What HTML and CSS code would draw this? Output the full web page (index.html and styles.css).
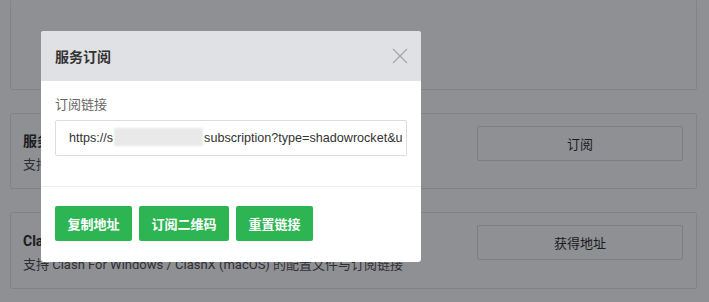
FILE: index.html
```html
<!DOCTYPE html>
<html lang="zh-CN">
<head>
    <meta charset="UTF-8">
    <meta name="viewport" content="width=device-width, initial-scale=1.0">
    <title>服务订阅</title>
    <link rel="stylesheet" href="styles.css">
</head>
<body>
    <div class="page">
        <div class="card card-top"></div>

        <div class="card">
            <div class="card-info">
                <div class="card-title">服务订阅</div>
                <div class="card-desc">支持 Shadowrocket / Quantumult 等客户端的订阅链接</div>
            </div>
            <button class="btn-outline">订阅</button>
        </div>

        <div class="card card-clash">
            <div class="card-info">
                <div class="card-title">Clash</div>
                <div class="card-desc">支持 Clash For Windows / ClashX (macOS) 的配置文件与订阅链接</div>
            </div>
            <button class="btn-outline">获得地址</button>
        </div>
    </div>

    <!-- 遮罩 + 弹窗 -->
    <div class="mask"></div>
    <div class="dialog">
        <div class="dialog-header">
            <span class="dialog-title">服务订阅</span>
            <button class="dialog-close" aria-label="关闭">
                <svg width="16" height="16" viewBox="0 0 16 16">
                    <path d="M1 1 L15 15 M15 1 L1 15" stroke="#a7a8ab" stroke-width="1.4" fill="none"/>
                </svg>
            </button>
        </div>
        <div class="dialog-body">
            <div class="field-label">订阅链接</div>
            <div class="link-input">https://s<span class="blurred"></span>subscription?type=shadowrocket&amp;u</div>
        </div>
        <div class="dialog-footer">
            <button class="btn-green">复制地址</button>
            <button class="btn-green">订阅二维码</button>
            <button class="btn-green">重置链接</button>
        </div>
    </div>
</body>
</html>
```

FILE: styles.css
```css
/* 基础 */
body {
    margin: 0;
    background-color: #ffffff;
    font-family: Roboto, "Liberation Sans", "Noto Sans CJK SC", sans-serif;
    color: #333;
    overflow: hidden;
}
button {
    font-family: inherit;
}
.page {
    padding: 0 12px 0 10px;
}

/* 背景卡片 */
.card {
    box-sizing: border-box;
    height: 76px;
    margin-top: 23px;
    border: 1px solid #e8e8e8;
    border-radius: 2px;
    padding: 12px 13px 0 12px;
    display: flex;
    justify-content: space-between;
    align-items: flex-start;
}
.card-top {
    margin-top: 0;
    height: 90px;
    border-top: none;
}
.card-clash {
    height: 77px;
}
.card-info {
    margin-top: 5px;
}
.card-clash .card-info {
    margin-top: 6px;
}
.card-title {
    font-size: 14px;
    font-weight: bold;
    line-height: 20px;
    color: #333;
}
.card-desc {
    margin-top: 4px;
    font-size: 13px;
    line-height: 20px;
    color: #555;
}
.btn-outline {
    width: 206px;
    height: 35px;
    background: #fff;
    border: 1px solid #dedede;
    border-radius: 2px;
    font-size: 13px;
    color: #333;
}

/* 遮罩 */
.mask {
    position: fixed;
    top: 0;
    left: 0;
    right: 0;
    bottom: 0;
    background: rgba(0, 2, 11, 0.44);
}

/* 弹窗 */
.dialog {
    position: fixed;
    top: 31px;
    left: 41px;
    width: 380px;
    height: 231px;
    background: #fff;
    border-radius: 3px;
    overflow: hidden;
}
.dialog-header {
    height: 50px;
    background: #e0e1e4;
    display: flex;
    align-items: center;
    justify-content: space-between;
    padding: 0 11px 0 14px;
}
.dialog-title {
    font-size: 14px;
    font-weight: bold;
    color: #333;
}
.dialog-close {
    width: 20px;
    height: 20px;
    padding: 0;
    border: none;
    background: none;
    display: flex;
    align-items: center;
    justify-content: center;
}
.dialog-body {
    padding: 15px 14px 30px 14px;
    border-bottom: 1px solid #eeeeee;
}
.field-label {
    font-size: 13px;
    line-height: 18px;
    color: #666;
}
.link-input {
    margin-top: 6px;
    height: 34px;
    border: 1px solid #dddddd;
    border-radius: 2px;
    padding: 0 8px 0 13px;
    font-family: "Liberation Sans", "Noto Sans CJK SC", sans-serif;
    font-size: 12.6px;
    line-height: 34px;
    color: #333;
    white-space: nowrap;
    overflow: hidden;
}
.blurred {
    display: inline-block;
    width: 89px;
    height: 18px;
    vertical-align: -4px;
    background: #e9e9ea;
    filter: blur(1px);
    margin: 0 1px;
}
.dialog-footer {
    padding: 19px 14px;
    display: flex;
    gap: 7px;
}
.btn-green {
    height: 35px;
    padding: 0 12.5px;
    background: #2db553;
    border: none;
    border-radius: 2px;
    color: #fff;
    font-size: 13px;
    font-weight: bold;
}
```
